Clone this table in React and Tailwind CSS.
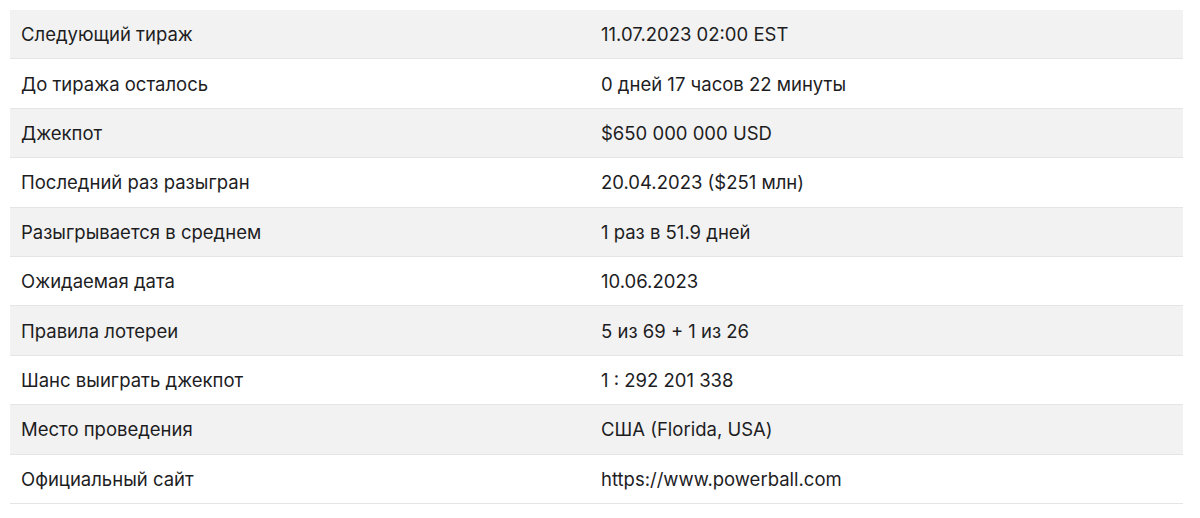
const rows = [
  ["Следующий тираж", "11.07.2023 02:00 EST"],
  ["До тиража осталось", "0 дней 17 часов 22 минуты"],
  ["Джекпот", "$650 000 000 USD"],
  ["Последний раз разыгран", "20.04.2023 ($251 млн)"],
  ["Разыгрывается в среднем", "1 раз в 51.9 дней"],
  ["Ожидаемая дата", "10.06.2023"],
  ["Правила лотереи", "5 из 69 + 1 из 26"],
  ["Шанс выиграть джекпот", "1 : 292 201 338"],
  ["Место проведения", "США (Florida, USA)"],
  ["Официальный сайт", "https://www.powerball.com"],
];

export default function App() {
  return (
    <div className="w-[1200px] h-[518px] bg-white pt-[10px] pl-[10px]" style={{ fontFamily: "Inter, 'Noto Sans', sans-serif" }}>
      <div className="w-[1173px] flex flex-col">
        {rows.map(([k, v], i) => (
          <div
            key={i}
            className={`grid grid-cols-[580px_1fr] border-b border-[#e5e5e5] h-[49.4px] pt-[2px] items-center text-[18.5px] text-[#1d1d1f] ${i % 2 === 0 ? "bg-[#f2f2f2]" : "bg-white"}`}
          >
            <div className="pl-[11px]">{k}</div>
            <div className="pl-[11px]">{v}</div>
          </div>
        ))}
      </div>
    </div>
  );
}
